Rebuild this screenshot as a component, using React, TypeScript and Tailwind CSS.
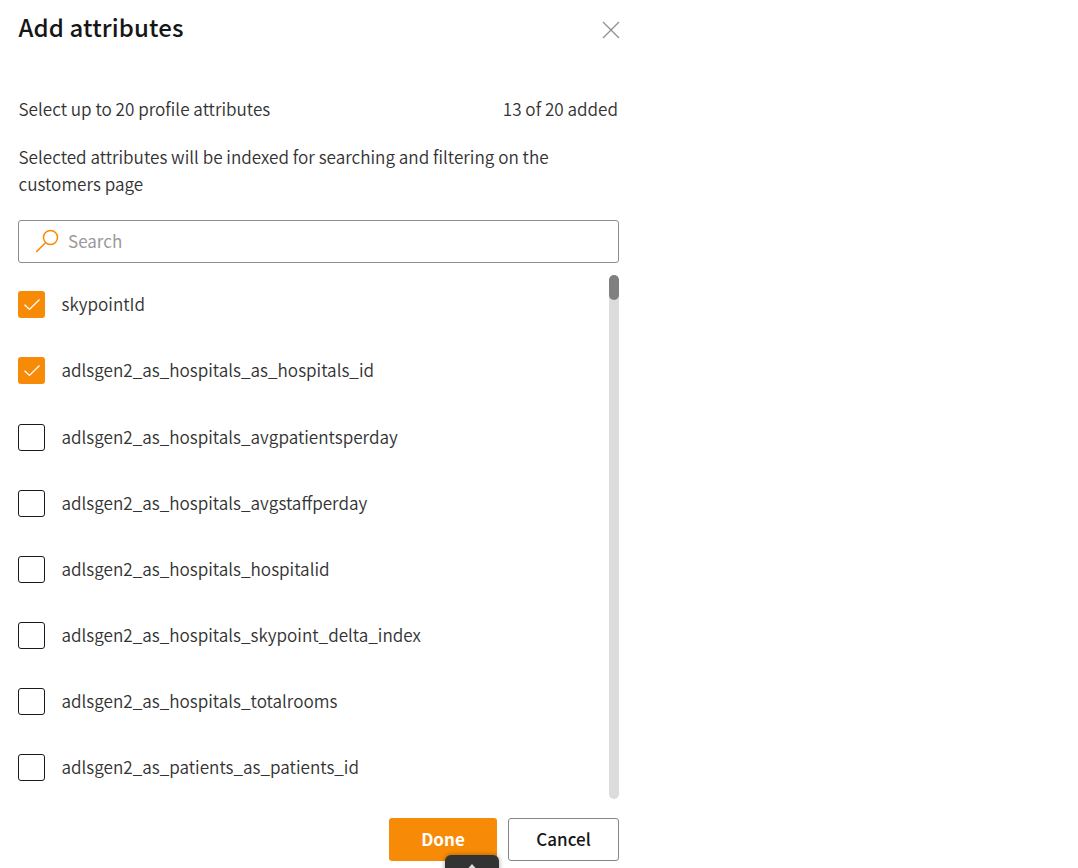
import React from "react";

const attributes = [
  { name: "skypointId", checked: true },
  { name: "adlsgen2_as_hospitals_as_hospitals_id", checked: true },
  { name: "adlsgen2_as_hospitals_avgpatientsperday", checked: false },
  { name: "adlsgen2_as_hospitals_avgstaffperday", checked: false },
  { name: "adlsgen2_as_hospitals_hospitalid", checked: false },
  { name: "adlsgen2_as_hospitals_skypoint_delta_index", checked: false },
  { name: "adlsgen2_as_hospitals_totalrooms", checked: false },
  { name: "adlsgen2_as_patients_as_patients_id", checked: false },
];

function Checkbox({ checked }: { checked: boolean }) {
  return checked ? (
    <span className="flex size-[27px] shrink-0 items-center justify-center rounded-[3px] bg-[#f78b07]">
      <svg width="27" height="27" viewBox="0 0 27 27" fill="none" stroke="#fff" strokeWidth="1.4">
        <path d="M6.5 13.7 11.5 18.4 21.5 8.6" />
      </svg>
    </span>
  ) : (
    <span className="size-[27px] shrink-0 rounded-[3px] border border-[#1b1b1b]" />
  );
}

export default function App() {
  return (
    <div className="relative h-[868px] w-full overflow-hidden bg-white font-['Noto_Sans_CJK_SC',sans-serif] text-[#333]">
      <div className="flex w-[619px] flex-col pl-[18px] text-[17.12px] leading-[27px] font-[350]">
        <header className="flex h-[57px] items-start justify-between pt-[11px]">
          <h1 className="pl-[0.5px] text-[24px] leading-[32px] font-medium tracking-[0.12px] text-[#161616]">Add attributes</h1>
          <svg className="mt-[9px] -mr-0.5" width="20" height="20" viewBox="0 0 20 20" fill="none" stroke="#8d9196" strokeWidth="1.3">
            <path d="M2 2 18 18M18 2 2 18" />
          </svg>
        </header>

        <div className="mt-[38px] flex justify-between pr-px pl-[0.5px]">
          <p>Select up to 20 profile attributes</p>
          <p>13 of 20 added</p>
        </div>
        <p className="mt-[21px] w-[560px] pl-[0.5px]">
          Selected attributes will be indexed for searching and filtering on the customers page
        </p>

        <div className="mt-[23px] flex h-[43px] items-center rounded-[3px] border border-[#8c8c8c] pl-4 text-[17px] font-normal text-[#9a9a9a]">
          <svg className="-mt-px" width="26" height="26" viewBox="0 0 26 26" fill="none" stroke="#f78b07" strokeWidth="1.5">
            <circle cx="15.5" cy="9.5" r="7" />
            <path d="M10.5 14.7 1.3 23.9" />
          </svg>
          <span className="-mt-0.5 ml-[7px]">Search</span>
        </div>

        <div className="mt-3 flex h-[524px] justify-between">
          <ul className="pt-[16.25px]">
            {attributes.map((a) => (
              <li key={a.name} className="flex h-[66.15px] items-start gap-[16.5px]">
                <Checkbox checked={a.checked} />
                <span className="-mt-px">{a.name}</span>
              </li>
            ))}
          </ul>
          <div className="h-full w-[10px] rounded-full bg-[#dcdcdc]">
            <div className="h-[25px] w-[10px] rounded-full bg-[#808080]" />
          </div>
        </div>

        <footer className="mt-[19px] flex justify-end gap-[11px] text-[17px] font-medium">
          <button className="h-[43px] w-[108px] rounded-[3px] bg-[#f78b07] pb-0.5 font-bold text-white">Done</button>
          <button className="h-[43px] w-[111px] rounded-[3px] border border-[#858585] pb-0.5 text-[#161616]">Cancel</button>
        </footer>
      </div>
      <div className="absolute top-[855px] left-[445px] flex h-[30px] w-[54px] justify-center rounded-[6px] bg-[#333] shadow-[0_0_5px_rgba(0,0,0,0.35)]">
        <svg className="mt-[9px]" width="14" height="10" viewBox="0 0 14 10" fill="#ddd">
          <path d="M7 0 14 8H0Z" />
        </svg>
      </div>
    </div>
  );
}
